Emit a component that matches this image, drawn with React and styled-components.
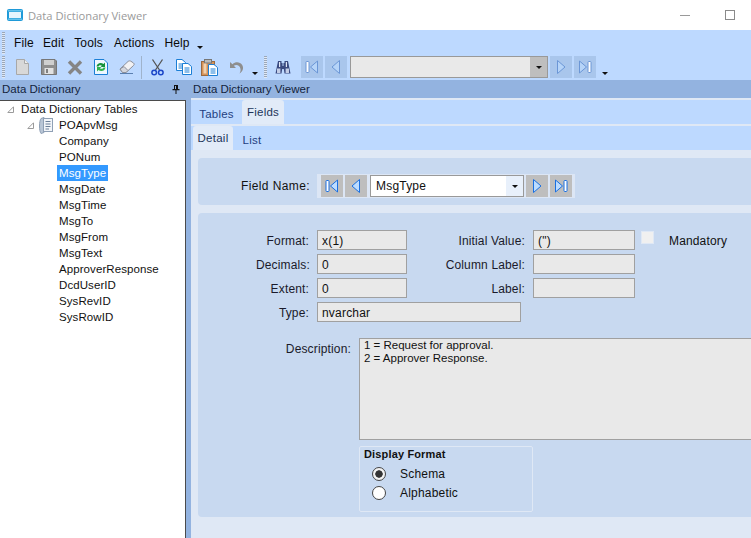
import React from 'react'
import styled, { createGlobalStyle } from 'styled-components'

const Global = createGlobalStyle`
  html, body { margin: 0; padding: 0; }
  body { width: 751px; height: 538px; overflow: hidden; background: #fff; font-family: "Liberation Sans", Arial, sans-serif; font-size: 12px; color: #111; }
`

const Window = styled.div`
  width: 751px;
  height: 538px;
  display: flex;
  flex-direction: column;
  overflow: hidden;
`

const TitleBar = styled.div`
  height: 30px;
  flex: none;
  display: flex;
  align-items: center;
  padding-left: 7px;
  color: #9a9a9a;
  font-family: "Open Sans", sans-serif;
  font-size: 11.2px;
  background: #fff;
`

const TitleText = styled.span`
  margin-left: 5px;
`

const WinButtons = styled.div`
  margin-left: auto;
  display: flex;
  align-items: center;
  padding-right: 16px;
  gap: 35px;
`

const MinButton = styled.span`
  width: 10px;
  height: 1px;
  background: #9a9a9a;
`

const MaxButton = styled.span`
  width: 8px;
  height: 8px;
  border: 1px solid #8a8a8a;
`

const Bars = styled.div`
  height: 50px;
  flex: none;
  background: #bdd9ff;
  display: flex;
  flex-direction: column;
`

const MenuRow = styled.div`
  height: 25px;
  padding-top: 1px;
  box-sizing: border-box;
  display: flex;
  align-items: center;
  padding-left: 2px;
`

const Grip = styled.span`
  width: 3px;
  height: 22px;
  flex: none;
  margin-left: ${p => p.$ml || 0}px;
  background: repeating-linear-gradient(#9aa7b8 0 1px, #dfe8f5 1px 2px);
`

const MenuItem = styled.span`
  margin-left: ${p => p.$ml}px;
  font-size: 12px;
  letter-spacing: 0.15px;
  color: #0a0a0a;
`

const Overflow = styled.span`
  width: 0;
  height: 0;
  flex: none;
  border-left: 3px solid transparent;
  border-right: 3px solid transparent;
  border-top: 3px solid #111;
  margin-left: ${p => p.$ml}px;
  margin-top: ${p => p.$mt || 8}px;
`

const ToolRow = styled.div`
  height: 25px;
  box-sizing: border-box;
  padding: 0 0 1px 2px;
  display: flex;
  align-items: center;
`

const ToolIcon = styled.span`
  display: flex;
  flex: none;
  margin-left: ${p => p.$ml}px;
`

const Separator = styled.span`
  width: 1px;
  height: 23px;
  flex: none;
  background: #9fb3cc;
  margin-left: ${p => p.$ml}px;
`

const NavButton = styled.span`
  width: 22px;
  height: 22px;
  flex: none;
  display: flex;
  align-items: center;
  justify-content: center;
  margin-left: ${p => p.$ml || 2}px;
  background: ${p => p.$bg};
`

const Combo = styled.div`
  width: ${p => p.$w}px;
  height: 22px;
  flex: none;
  box-sizing: border-box;
  margin-left: ${p => p.$ml || 3}px;
  border: 1px solid #999;
  background: ${p => p.$bg};
  display: flex;
  align-items: center;
  letter-spacing: 0.2px;
`

const ComboText = styled.span`
  flex: 1;
  padding-left: 5px;
`

const ComboArrow = styled.span`
  width: ${p => p.$w}px;
  align-self: stretch;
  display: flex;
  align-items: center;
  justify-content: center;
  background: ${p => p.$bg};
  &::after {
    content: '';
    border-left: 3px solid transparent;
    border-right: 3px solid transparent;
    border-top: 3px solid #111;
  }
`

const HeaderRow = styled.div`
  height: 18px;
  flex: none;
  display: flex;
  background: #93b3e0;
  color: #14233c;
  font-size: 11.5px;
`

const HeaderLeft = styled.div`
  width: 191px;
  box-sizing: border-box;
  padding: 0 11px 0 2px;
  display: flex;
  align-items: center;
  justify-content: space-between;
`

const HeaderRight = styled.div`
  display: flex;
  align-items: center;
  padding-left: 2px;
`

const Body = styled.div`
  flex: 1;
  min-height: 0;
  display: flex;
`

const Sidebar = styled.div`
  width: 191px;
  flex: none;
  box-sizing: border-box;
  background: #93b3e0;
  padding: 2px 5px 0 0;
  display: flex;
`

const Tree = styled.div`
  flex: 1;
  background: #fff;
  border-top: 1px solid #4b4b4b;
  border-right: 1px solid #4b4b4b;
  display: flex;
  flex-direction: column;
`

const TreeRow = styled.div`
  height: 16px;
  flex: none;
  display: flex;
  align-items: center;
  padding-left: ${p => p.$indent}px;
  letter-spacing: 0.08px;
  font-size: 11.5px;
`

const TreeLabel = styled.span`
  padding: 0 2px;
  line-height: 16px;
  margin-left: ${p => p.$ml || 0}px;
  background: ${p => (p.$selected ? '#3399ff' : 'transparent')};
  color: ${p => (p.$selected ? '#fff' : '#111')};
`

const Main = styled.div`
  flex: 1;
  min-width: 0;
  display: flex;
  flex-direction: column;
  background: #dfe8f5;
  overflow: hidden;
`

const TabStrip = styled.div`
  height: 24px;
  flex: none;
  margin-top: 2px;
  display: flex;
  align-items: flex-end;
  background: #bdd9ff;
  padding-left: ${p => p.$pad}px;
`

const Tab = styled.div`
  width: ${p => p.$w}px;
  box-sizing: border-box;
  height: ${p => (p.$active ? 24 : 22)}px;
  padding-top: ${p => (p.$active ? 0 : 2)}px;
  display: flex;
  align-items: center;
  justify-content: center;
  margin-left: ${p => p.$ml || 0}px;
  border-radius: 3px 3px 0 0;
  background: ${p => (p.$active ? '#e2ebf8' : 'transparent')};
  color: ${p => (p.$active ? '#22355a' : '#1f3f7f')};
  letter-spacing: 0.25px;
  font-size: 11.5px;
`

const Content = styled.div`
  flex: 1;
  min-height: 0;
  padding: 8px 0 0 7px;
  display: flex;
  flex-direction: column;
  gap: 8px;
`

const Panel = styled.div`
  width: 600px;
  box-sizing: border-box;
  flex: none;
  height: ${p => p.$h}px;
  background: #c8d9f0;
  border-radius: 4px 0 0 4px;
`

const NameRow = styled.div`
  height: 100%;
  box-sizing: border-box;
  padding-top: 9px;
  display: flex;
  align-items: center;
`

const NameLabel = styled.span`
  width: 112px;
  flex: none;
  text-align: right;
  letter-spacing: 0.4px;
`

const NameBar = styled.div`
  margin-left: 7px;
  height: 24px;
  padding: 0 3px;
  display: flex;
  align-items: center;
  background: #dce6f5;
`

const Form = styled.div`
  display: flex;
  flex-direction: column;
  gap: 4px;
  padding-top: 17px;
`

const Row = styled.div`
  height: 20px;
  display: flex;
  align-items: center;
`

const Label = styled.span`
  width: ${p => p.$w}px;
  flex: none;
  padding-top: 1px;
  text-align: right;
  white-space: nowrap;
  letter-spacing: 0.15px;
  color: #1a1a2a;
`

const Field = styled.div`
  width: ${p => p.$w}px;
  height: 20px;
  flex: none;
  box-sizing: border-box;
  margin-left: ${p => p.$ml}px;
  padding: 1px 0 0 4px;
  border: 1px solid #a0a0a0;
  background: #e9e9e9;
  display: flex;
  align-items: center;
  letter-spacing: 0.2px;
`

const CheckBox = styled.span`
  width: 11px;
  height: 11px;
  flex: none;
  margin: -5px 0 0 6px;
  border: 1px solid #dfe8f5;
  background: #f0f0f0;
`

const Mandatory = styled.span`
  margin-left: 15px;
  padding-top: 1px;
  letter-spacing: 0.15px;
`

const DescRow = styled.div`
  display: flex;
  align-items: flex-start;
  margin-top: 16px;
`

const DescLabel = styled(Label)`
  padding-top: 4px;
`

const DescBox = styled.div`
  width: 400px;
  height: 102px;
  flex: none;
  box-sizing: border-box;
  margin-left: 8px;
  padding: 0 4px;
  border: 1px solid #a0a0a0;
  background: #e9e9e9;
  white-space: pre-line;
  line-height: 13px;
  font-size: 11.5px;
`

const GroupBox = styled.div`
  width: 174px;
  height: 66px;
  box-sizing: border-box;
  margin: 6px 0 0 161px;
  padding: 1px 4px;
  border: 1px solid #dfe8f5;
  border-radius: 2px;
`

const GroupTitle = styled.div`
  font-weight: 700;
  font-size: 11px;
  line-height: 13px;
  letter-spacing: 0.15px;
  margin-bottom: 3px;
`

const RadioRow = styled.div`
  height: 19px;
  display: flex;
  align-items: center;
  padding-left: 8px;
`

const Radio = styled.span`
  width: 12px;
  height: 12px;
  flex: none;
  border: 1px solid #444;
  border-radius: 50%;
  background: ${p => (p.$on ? 'radial-gradient(circle, #333 0 3.4px, #f2f2f2 4px)' : '#fff')};
`

const RadioLabel = styled.span`
  margin-left: 14px;
  letter-spacing: 0.2px;
`

const AppIcon = () => (
  <svg width="16" height="12" viewBox="0 0 16 12">
    <rect x="0" y="0" width="16" height="12" rx="2" fill="#1f9ad8" />
    <rect x="2" y="3" width="12" height="6" fill="#e6f5fd" />
    <rect x="1" y="1" width="14" height="1.5" fill="#63c1ea" />
    <rect x="1" y="9.5" width="14" height="1.5" fill="#63c1ea" />
  </svg>
)

const NewIcon = () => (
  <svg width="13" height="16" viewBox="0 0 13 16">
    <path d="M0.5 0.5H8.5L12.5 4.5V15.5H0.5Z" fill="#d8d8d8" stroke="#a8a8a8" />
    <path d="M8.5 0.5V4.5H12.5" fill="#eee" stroke="#a8a8a8" />
  </svg>
)

const SaveIcon = () => (
  <svg width="16" height="16" viewBox="0 0 16 16">
    <path d="M0.5 0.5H14L15.5 2V15.5H0.5Z" fill="#8f8f8f" stroke="#777" />
    <rect x="3" y="1" width="10" height="5" fill="#cfcfcf" />
    <rect x="3.5" y="9" width="9" height="6" fill="#e2e2e2" />
    <rect x="5" y="10" width="2" height="4" fill="#808080" />
  </svg>
)

const DeleteIcon = () => (
  <svg width="16" height="15" viewBox="0 0 16 15">
    <path d="M2 1.5L14 13.5M14 1.5L2 13.5" stroke="#858585" strokeWidth="3.4" />
  </svg>
)

const RefreshIcon = () => (
  <svg width="14" height="16" viewBox="0 0 14 16">
    <path d="M0.5 0.5H10L13.5 4V15.5H0.5Z" fill="#eef7ff" stroke="#1b7fd6" />
    <path d="M2.5 7.5C3 4 7 2.8 9.5 5L11 3.5V8H6.5L8 6.7C6.8 5.8 5 6 4.5 7.5Z" fill="#15923a" />
    <path d="M11.5 8.5C11 12 7 13.2 4.5 11L3 12.5V8H7.5L6 9.3C7.2 10.2 9 10 9.5 8.5Z" fill="#2fb34e" />
  </svg>
)

const EraserIcon = () => (
  <svg width="16" height="14" viewBox="0 0 16 14">
    <path d="M1 9L9 1.5C10 0.7 11 0.7 12 1.3L14.5 3C15.4 3.8 15.3 4.8 14.5 5.5L7 12.5H3.5Z" fill="#f2f2f4" stroke="#8b8f9a" />
    <path d="M1 9L3.5 12.5H7L9 10.5L5 6.5Z" fill="#d4d6dd" stroke="#8b8f9a" />
    <path d="M1 13.5H14" stroke="#5a7fb0" />
  </svg>
)

const CutIcon = () => (
  <svg width="13" height="17" viewBox="0 0 13 17">
    <path d="M1.5 0.5L8.5 11M11.5 0.5L4.5 11" stroke="#555" strokeWidth="1.3" />
    <circle cx="3.2" cy="13.5" r="2.3" fill="none" stroke="#1b46c8" strokeWidth="1.5" />
    <circle cx="9.8" cy="13.5" r="2.3" fill="none" stroke="#1b46c8" strokeWidth="1.5" />
  </svg>
)

const Sheet = ({ x, y }) => (
  <g transform={`translate(${x} ${y})`}>
    <path d="M0.5 0.5H6L9.5 3.5V11.5H0.5Z" fill="#fff" stroke="#1b7fd6" />
    <path d="M2.5 5H7.5M2.5 7H7.5M2.5 9H7.5" stroke="#1b7fd6" />
  </g>
)

const CopyIcon = () => (
  <svg width="16" height="16" viewBox="0 0 16 16">
    <Sheet x={0} y={0} />
    <Sheet x={6} y={4} />
  </svg>
)

const PasteIcon = () => (
  <svg width="17" height="17" viewBox="0 0 17 17">
    <rect x="0.5" y="2.5" width="13" height="14" fill="#d6935a" stroke="#9a6a40" />
    <rect x="3.5" y="0.5" width="7" height="3.5" fill="#bbb" stroke="#777" />
    <rect x="2.5" y="4.5" width="3" height="10" fill="#f0d2b0" />
    <Sheet x={7} y={5} />
  </svg>
)

const UndoIcon = () => (
  <svg width="15" height="13" viewBox="0 0 15 13">
    <path d="M1 1V7H7L4.8 4.8C7.5 3 11 4.5 11.5 8C11.8 9.5 11.3 11 10.5 12.5C13.8 10.5 15 7 13.2 4C11 0.8 6.5 0.5 3.5 3.2Z" fill="#8e8e8e" />
  </svg>
)

const BinocularsIcon = () => (
  <svg width="16" height="15" viewBox="0 0 16 15">
    <path d="M3 1H6.5V3H7.5V6H8.5V3H9.5V1H13L15.5 13.5H9.5L8.8 9H7.2L6.5 13.5H0.5Z" fill="#3a4a80" />
    <rect x="4" y="2" width="1.2" height="5" fill="#dfe6f5" />
    <rect x="10.8" y="2" width="1.2" height="5" fill="#dfe6f5" />
    <rect x="2" y="8.5" width="3.4" height="4.5" fill="#c3cde6" />
    <rect x="10.6" y="8.5" width="3.4" height="4.5" fill="#c3cde6" />
  </svg>
)

const NavIcon = ({ kind, stroke, fill }) => (
  <svg width="14" height="14" viewBox="0 0 14 14">
    {kind === 'first' && <rect x="1" y="1.5" width="3" height="11" rx="0.8" fill="#fff" stroke={stroke} />}
    {kind === 'last' && <rect x="10" y="1.5" width="3" height="11" rx="0.8" fill="#fff" stroke={stroke} />}
    {kind === 'first' && <path d="M12.5 1L5.5 7L12.5 13Z" fill={fill} stroke={stroke} />}
    {kind === 'prev' && <path d="M10.5 0.5L3 7L10.5 13.5Z" fill={fill} stroke={stroke} />}
    {kind === 'next' && <path d="M3.5 0.5L11 7L3.5 13.5Z" fill={fill} stroke={stroke} />}
    {kind === 'last' && <path d="M1.5 1L8.5 7L1.5 13Z" fill={fill} stroke={stroke} />}
  </svg>
)

const PinIcon = () => (
  <svg width="8" height="9" viewBox="0 0 8 9">
    <path d="M2 0H6V4H7.5V5.2H4.5V9H3.5V5.2H0.5V4H2Z" fill="#111" />
    <rect x="3" y="1" width="1" height="3" fill="#93b3e0" />
  </svg>
)

const Expander = () => (
  <svg width="7" height="7" viewBox="0 0 7 7" style={{ flex: 'none' }}>
    <path d="M6.5 0.8V6.5H0.8Z" fill="#fff" stroke="#9a9a9a" />
  </svg>
)

const BookIcon = () => (
  <svg width="16" height="17" viewBox="0 0 16 17" style={{ flex: 'none', marginLeft: 4 }}>
    <path d="M3 1.5L6 0.5V15.5L3 16.5C1 14 1 4 3 1.5Z" fill="#b9c6d6" stroke="#8fa0b5" />
    <rect x="5.5" y="1.5" width="9" height="13" fill="#f2f5f9" stroke="#8fa0b5" />
    <path d="M7.5 4.5H12.5M7.5 7H12.5M7.5 9.5H12.5M7.5 12H11" stroke="#6b7f98" />
  </svg>
)

const fields = ['Company', 'PONum', 'MsgType', 'MsgDate', 'MsgTime', 'MsgTo', 'MsgFrom', 'MsgText', 'ApproverResponse', 'DcdUserID', 'SysRevID', 'SysRowID']

function App() {
  return (
    <Window>
      <Global />
      <TitleBar>
        <AppIcon />
        <TitleText>Data Dictionary Viewer</TitleText>
        <WinButtons>
          <MinButton />
          <MaxButton />
        </WinButtons>
      </TitleBar>

      <Bars>
        <MenuRow>
          <Grip />
          <MenuItem $ml={9}>File</MenuItem>
          <MenuItem $ml={9}>Edit</MenuItem>
          <MenuItem $ml={10}>Tools</MenuItem>
          <MenuItem $ml={11}>Actions</MenuItem>
          <MenuItem $ml={10}>Help</MenuItem>
          <Overflow $ml={7} />
        </MenuRow>
        <ToolRow>
          <Grip />
          <ToolIcon $ml={11}><NewIcon /></ToolIcon>
          <ToolIcon $ml={12}><SaveIcon /></ToolIcon>
          <ToolIcon $ml={10}><DeleteIcon /></ToolIcon>
          <ToolIcon $ml={11}><RefreshIcon /></ToolIcon>
          <ToolIcon $ml={11}><EraserIcon /></ToolIcon>
          <Separator $ml={6} />
          <ToolIcon $ml={9}><CutIcon /></ToolIcon>
          <ToolIcon $ml={12}><CopyIcon /></ToolIcon>
          <ToolIcon $ml={9}><PasteIcon /></ToolIcon>
          <ToolIcon $ml={11}><UndoIcon /></ToolIcon>
          <Overflow $ml={8} $mt={12} />
          <Grip $ml={6} />
          <ToolIcon $ml={8}><BinocularsIcon /></ToolIcon>
          <NavButton $ml={10} $bg="#a9c6ec"><NavIcon kind="first" stroke="#6b96d6" fill="#b6d4f8" /></NavButton>
          <NavButton $ml={2} $bg="#a9c6ec"><NavIcon kind="prev" stroke="#6b96d6" fill="#b6d4f8" /></NavButton>
          <Combo $w={198} $bg="#e9e9e9">
            <ComboText />
            <ComboArrow $w={17} $bg="#bebebe" />
          </Combo>
          <NavButton $bg="#a9c6ec"><NavIcon kind="next" stroke="#6b96d6" fill="#b6d4f8" /></NavButton>
          <NavButton $bg="#a9c6ec"><NavIcon kind="last" stroke="#6b96d6" fill="#b6d4f8" /></NavButton>
          <Overflow $ml={6} $mt={12} />
        </ToolRow>
      </Bars>

      <HeaderRow>
        <HeaderLeft>
          Data Dictionary
          <PinIcon />
        </HeaderLeft>
        <HeaderRight>Data Dictionary Viewer</HeaderRight>
      </HeaderRow>

      <Body>
        <Sidebar>
          <Tree>
            <TreeRow $indent={7}>
              <Expander />
              <TreeLabel $ml={5}>Data Dictionary Tables</TreeLabel>
            </TreeRow>
            <TreeRow $indent={27}>
              <Expander />
              <BookIcon />
              <TreeLabel $ml={3}>POApvMsg</TreeLabel>
            </TreeRow>
            {fields.map(name => (
              <TreeRow key={name} $indent={57}>
                <TreeLabel $selected={name === 'MsgType'}>{name}</TreeLabel>
              </TreeRow>
            ))}
          </Tree>
        </Sidebar>

        <Main>
          <TabStrip $pad={0}>
            <Tab $w={51}>Tables</Tab>
            <Tab $w={42} $active>Fields</Tab>
          </TabStrip>
          <TabStrip $pad={2}>
            <Tab $w={40} $active>Detail</Tab>
            <Tab $w={36} $ml={1}>List</Tab>
          </TabStrip>
          <Content>
            <Panel $h={47}>
              <NameRow>
                <NameLabel>Field Name:</NameLabel>
                <NameBar>
                  <NavButton $ml={1} $bg="#bebebe"><NavIcon kind="first" stroke="#1a6fe0" fill="#bcdcff" /></NavButton>
                  <NavButton $bg="#bebebe"><NavIcon kind="prev" stroke="#1a6fe0" fill="#bcdcff" /></NavButton>
                  <Combo $w={154} $bg="#fff">
                    <ComboText>MsgType</ComboText>
                    <ComboArrow $w={17} $bg="#e8f0fb" />
                  </Combo>
                  <NavButton $bg="#bebebe"><NavIcon kind="next" stroke="#1a6fe0" fill="#bcdcff" /></NavButton>
                  <NavButton $bg="#bebebe"><NavIcon kind="last" stroke="#1a6fe0" fill="#bcdcff" /></NavButton>
                </NameBar>
              </NameRow>
            </Panel>
            <Panel $h={304}>
              <Form>
                <Row>
                  <Label $w={111}>Format:</Label>
                  <Field $w={90} $ml={8}>x(1)</Field>
                  <Label $w={118}>Initial Value:</Label>
                  <Field $w={102} $ml={8}>(")</Field>
                  <CheckBox />
                  <Mandatory>Mandatory</Mandatory>
                </Row>
                <Row>
                  <Label $w={112}>Decimals:</Label>
                  <Field $w={90} $ml={7}>0</Field>
                  <Label $w={118}>Column Label:</Label>
                  <Field $w={102} $ml={8} />
                </Row>
                <Row>
                  <Label $w={111}>Extent:</Label>
                  <Field $w={90} $ml={8}>0</Field>
                  <Label $w={118}>Label:</Label>
                  <Field $w={102} $ml={8} />
                </Row>
                <Row>
                  <Label $w={111}>Type:</Label>
                  <Field $w={204} $ml={8}>nvarchar</Field>
                </Row>
              </Form>
              <DescRow>
                <DescLabel $w={153}>Description:</DescLabel>
                <DescBox>{'1 = Request for approval.\n2 = Approver Response.'}</DescBox>
              </DescRow>
              <GroupBox>
                <GroupTitle>Display Format</GroupTitle>
                <RadioRow>
                  <Radio $on />
                  <RadioLabel>Schema</RadioLabel>
                </RadioRow>
                <RadioRow>
                  <Radio />
                  <RadioLabel>Alphabetic</RadioLabel>
                </RadioRow>
              </GroupBox>
            </Panel>
          </Content>
        </Main>
      </Body>
    </Window>
  )
}

export default App
